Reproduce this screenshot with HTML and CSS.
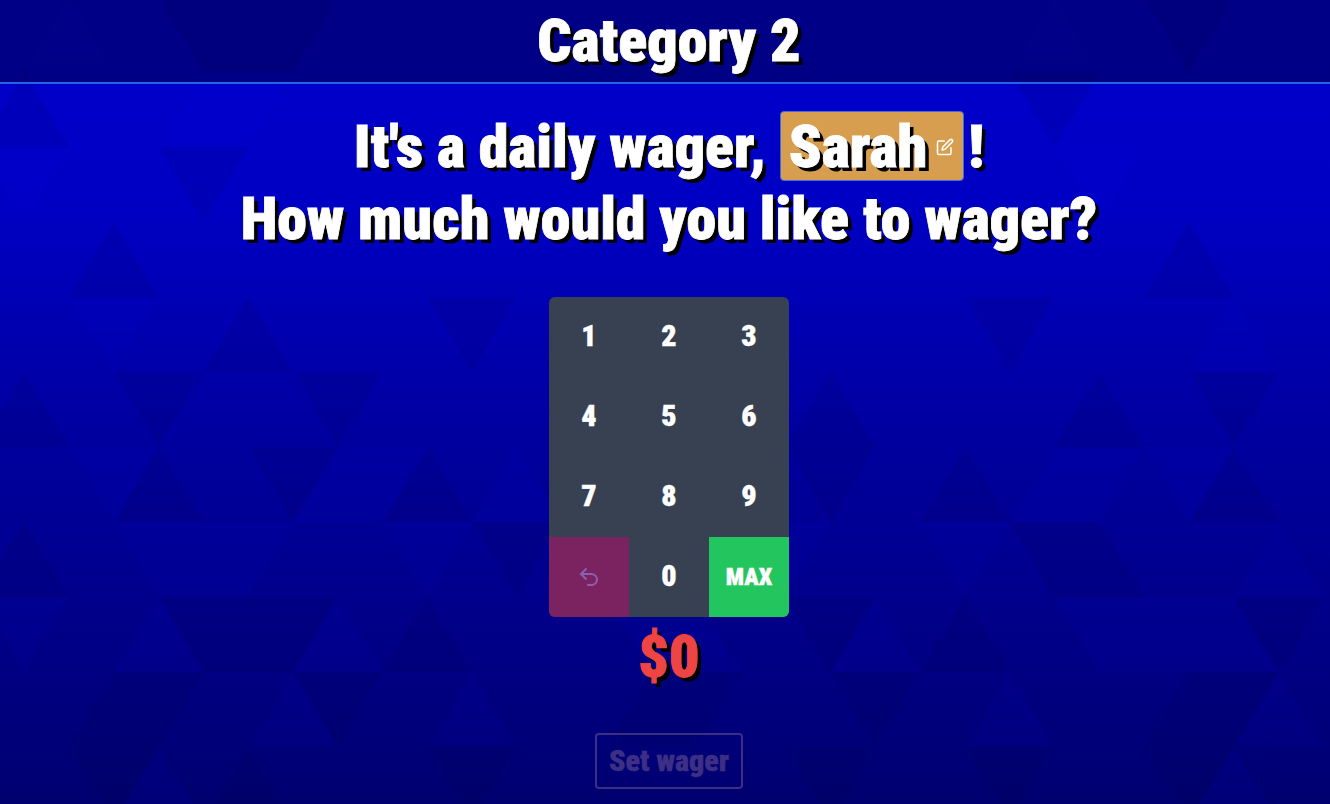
FILE: index.html
```html
<!DOCTYPE html>
<html lang="en">
<head>
<meta charset="utf-8">
<title>Wager</title>
<link rel="stylesheet" href="styles.css">
</head>
<body>
<div class="page">
  <svg class="mosaic" width="1330" height="804" viewBox="0 0 1330 804" aria-hidden="true">
    <defs>
      <linearGradient id="fade" x1="0" y1="0" x2="0" y2="1">
        <stop offset="0" stop-color="#0000cc"/>
        <stop offset="0.25" stop-color="#0000c4"/>
        <stop offset="0.55" stop-color="#00009e"/>
        <stop offset="0.8" stop-color="#000086"/>
        <stop offset="1" stop-color="#000070"/>
      </linearGradient>
    </defs>
    <rect width="1330" height="804" fill="url(#fade)"/>
    <g transform="translate(-20.4 147) scale(44.8 75)">
      <path class="tri-dark" d="M4-2h2l-1 1zM6-2h2l-1 1zM7-1H5l1-1zM26-2h2l-1 1z
        M2 0H0l1-1zM23-1h2l-1 1z
        M4 0h2l-1 1z
        M4 2H2l1-1zM28 2h-2l1-1z
        M10 2h2l-1 1zM22 2h2l-1 1zM7 3H5l1-1z
        M2 4H0l1-1zM3 3h2l-1 1zM7 3h2l-1 1zM26 4h-2l1-1zM27 3h2l-1 1zM20 4h-2l1-1z
        M5 5H3l1-1zM6 4h2l-1 1zM11 5H9l1-1zM18 4h2l-1 1zM23 5h-2l1-1zM29 5h-2l1-1z
        M2 6H0l1-1zM11 5h2l-1 1zM23 5h2l-1 1zM26 6h-2l1-1z
        M4 6h2l-1 1zM7 7H5l1-1zM6 6h2l-1 1zM11 7H9l1-1zM23 7h-2l1-1zM28 6h2l-1 1zM18 6h2l-1 1z
        M3 7h2l-1 1zM4 8H2l1-1zM7 7h2l-1 1zM19 7h2l-1 1zM27 7h2l-1 1zM28 8h-2l1-1zM16 8h-2l1-1zM15 7h2l-1 1z
        M2 8h2l-1 1zM7 9H5l1-1zM10 8h2l-1 1zM22 8h2l-1 1zM26 8h2l-1 1zM18 8h2l-1 1z"/>
      <path class="tri-light" d="M3-1H1l1-1zM25-1h-2l1-1z
        M6 0H4l1-1zM5-1h2l-1 1z
        M0 0h2l-1 1zM24 0h2l-1 1z
        M2 2h2l-1 1zM29 3h-2l1-1z
        M2 4h2l-1 1zM9 5H7l1-1zM8 4h2l-1 1zM13 5h-2l1-1zM24 4h2l-1 1zM25 5h-2l1-1zM26 4h2l-1 1z
        M3 5h2l-1 1zM6 6H4l1-1zM5 5h2l-1 1zM9 5h2l-1 1zM17 5h2l-1 1zM21 5h2l-1 1zM30 6h-2l1-1z
        M0 6h2l-1 1zM5 7H3l1-1zM9 7H7l1-1zM21 7h-2l1-1zM24 6h2l-1 1zM27 7h-2l1-1zM26 6h2l-1 1zM29 7h-2l1-1zM14 6h2l-1 1zM17 7h-2l1-1z
        M8 8H6l1-1zM12 8h-2l1-1zM24 8h-2l1-1zM30 8h-2l1-1z
        M5 9H3l1-1zM29 9h-2l1-1z"/>
    </g>
  </svg>
  <header class="top-bar">
    <h1 class="category">Category 2</h1>
  </header>
  <main class="content">
    <h2 class="prompt">
      <span class="prompt-line">It's a daily wager,
        <span class="name-chip">Sarah
          <svg class="edit-icon" viewBox="0 0 24 24" fill="none" stroke="currentColor" stroke-width="2" stroke-linecap="round" stroke-linejoin="round"><path d="M11 4H4a2 2 0 0 0-2 2v14a2 2 0 0 0 2 2h14a2 2 0 0 0 2-2v-7"/><path d="M18.500 2.500a2.121 2.121 0 0 1 3 3L12 15l-4 1 1-4 9.500-9.500z"/></svg>
        </span><span class="bang">!</span>
      </span>
      <span class="prompt-line">How much would you like to wager?</span>
    </h2>
    <div class="keypad">
      <button class="key">1</button><button class="key">2</button><button class="key">3</button>
      <button class="key">4</button><button class="key">5</button><button class="key">6</button>
      <button class="key">7</button><button class="key">8</button><button class="key">9</button>
      <button class="key key-back" aria-label="Undo">
        <svg class="undo-icon" viewBox="0 0 24 24" fill="none" stroke="currentColor" stroke-width="2" stroke-linecap="round" stroke-linejoin="round"><path d="M9 14 4 9l5-5"/><path d="M4 9h10.500a5.500 5.500 0 0 1 0 11H11"/></svg>
      </button>
      <button class="key">0</button>
      <button class="key key-max">MAX</button>
    </div>
    <div class="amount">$0</div>
    <button class="submit">Set wager</button>
  </main>
</div>
</body>
</html>
```
FILE: styles.css
```css
* { box-sizing: border-box; }
html, body { margin: 0; height: 100%; }
body { font-family: "Roboto Condensed", "Liberation Sans Narrow", Roboto, sans-serif; color: #fff; overflow: hidden; background: #0000a8; }
.page { position: relative; width: 1330px; height: 804px; overflow: hidden; display: flex; flex-direction: column; align-items: center; }
.mosaic { position: absolute; inset: 0; }
.tri-dark { fill: #000038; opacity: .09; }
.tri-light { fill: #0000ff; opacity: .06; }
.top-bar { position: relative; width: 100%; height: 84px; flex: none; padding-left: 8px; background: rgba(0, 0, 40, .42); border-bottom: 2px solid #2563eb; display: flex; justify-content: center; align-items: center; }
.category { margin: 0; font-size: 60px; line-height: 72px; font-weight: 900; font-stretch: condensed; -webkit-text-stroke: .8px; text-shadow: 4px 4px 0 #000; }
.content { position: relative; display: flex; flex-direction: column; align-items: center; width: 100%; padding-left: 8px; }
.prompt { margin: 27px 0 0; display: flex; flex-direction: column; align-items: center; font-size: 60px; line-height: 72px; font-weight: 900; font-stretch: condensed; -webkit-text-stroke: .8px; text-shadow: 4px 4px 0 #000; }
.prompt-line { display: block; height: 72px; white-space: nowrap; }
.name-chip { display: inline-flex; align-items: center; height: 70px; padding: 2px 9px 0 8px; gap: 9px; background: #d69e4e; border: 1px solid #3b6fe0; border-radius: 4px; vertical-align: baseline; }
.bang { margin-left: 4px; }
.edit-icon { width: 18px; height: 18px; color: #fff; }
.keypad { margin-top: 42px; width: 240px; display: grid; grid-template-columns: repeat(3, 80px); grid-auto-rows: 80px; background: #374151; border-radius: 6px; overflow: hidden; }
.key { border: 0; padding: 0 0 3px; background: transparent; color: #fff; font: inherit; font-size: 30px; font-weight: 900; font-stretch: condensed; -webkit-text-stroke: .4px; }
.key-back { padding: 0; background: #7b2360; color: #8a5fb0; display: flex; align-items: center; justify-content: center; }
.key-max { padding: 0; background: #22c55e; font-size: 24px; }
.undo-icon { width: 24px; height: 24px; }
.amount { margin-top: 4px; font-size: 60px; line-height: 72px; font-weight: 900; font-stretch: condensed; -webkit-text-stroke: .8px; color: #ef4444; text-shadow: 4px 4px 0 #000; }
.submit { margin-top: 40px; padding: 0 0 2px; width: 148px; height: 56px; background: transparent; border: 2px solid #3d2f83; border-radius: 4px; color: #3d2f83; font: inherit; font-size: 30px; font-weight: 900; font-stretch: condensed; -webkit-text-stroke: .4px; }
```
